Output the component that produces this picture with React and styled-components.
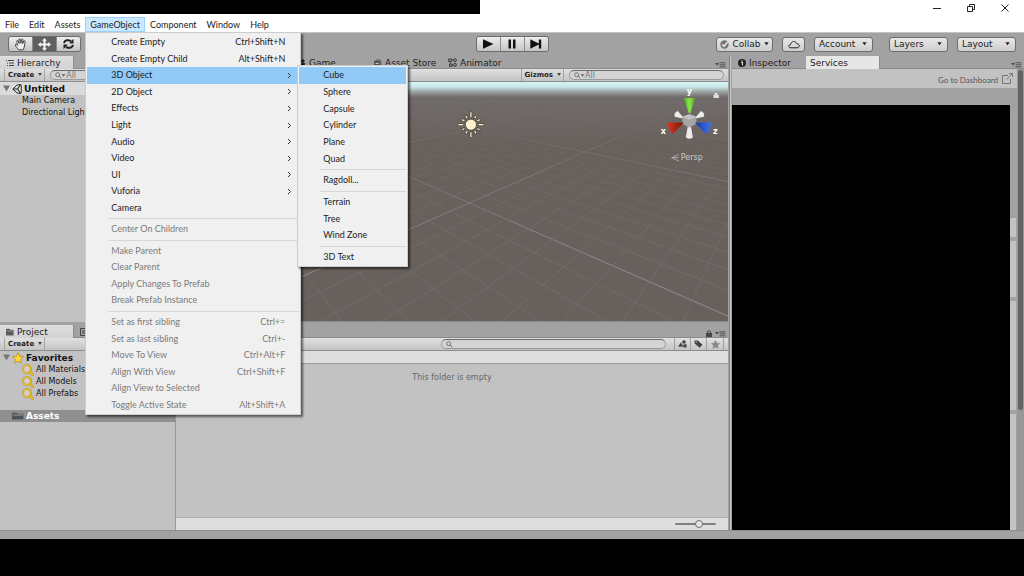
import React from 'react';
import styled, { createGlobalStyle, css } from 'styled-components';

const GlobalStyle = createGlobalStyle`
  * {
    box-sizing: border-box;
  }
  body {
    margin: 0;
    background: #000;
    color: #222;
    font-family: 'DejaVu Sans', sans-serif;
    font-size: 8px;
    line-height: 12px;
  }
  button, input, select {
    font: inherit;
    color: inherit;
    margin: 0;
    padding: 0;
    border: 0;
    background: none;
    outline: none;
  }
  ul {
    list-style: none;
    margin: 0;
    padding: 0;
  }
`;

const Screen = styled.div`
  display: flex;
  flex-direction: column;
  min-height: 100vh;
`;

/* window frame */

const TitleBar = styled.header`
  display: flex;
  justify-content: space-between;
  height: 15px;
  background: #fff;
`;

const TitleMask = styled.div`
  width: 480px;
  height: 14px;
  background: #000;
`;

const WindowButtons = styled.div`
  display: flex;
  gap: 20px;
  padding-right: 12px;
`;

const WindowButton = styled.button`
  display: flex;
  align-items: center;
  justify-content: center;
  width: 14px;
  height: 15px;
`;

const MenuBar = styled.nav`
  display: flex;
  align-items: flex-start;
  height: 17px;
  padding-top: 2px;
  background: #fff;
  font-family: Lato, sans-serif;
  font-size: 9px;
`;

const MenuSlot = styled.div`
  position: relative;
`;

const MenuTitle = styled.button`
  display: block;
  height: 15px;
  padding: 0 4px;
  border: 1px solid transparent;
  line-height: 13px;
  ${(props) =>
    props.$open &&
    css`
      background: #cce8ff;
      border-color: #99d1ff;
    `}
`;

const Menu = styled.ul`
  position: absolute;
  top: ${(props) => (props.$sub ? '-2px' : '15px')};
  left: ${(props) => (props.$sub ? '210px' : '0')};
  z-index: ${(props) => (props.$sub ? 2 : 1)};
  display: flex;
  flex-direction: column;
  width: ${(props) => (props.$sub ? '111px' : '216px')};
  height: ${(props) => (props.$sub ? '202px' : '383px')};
  padding: 1px;
  border: 1px solid #ccc;
  background: #f0f0f0;
  box-shadow: 2px 2px 2px rgba(0, 0, 0, 0.55);
`;

const MenuRow = styled.li`
  position: relative;
  flex: 1;
  display: flex;
`;

const MenuItem = styled.button`
  flex: 1;
  display: flex;
  align-items: center;
  justify-content: space-between;
  padding: 0 14px 0 24px;
  color: #222;
  text-align: left;
  white-space: nowrap;
  ${(props) =>
    props.$arrow &&
    css`
      padding-right: 7px;
    `}
  ${(props) =>
    props.$active &&
    css`
      background: #91c9f7;
    `}
  &:disabled {
    color: #7b7b7b;
  }
`;

const MenuLine = styled.li`
  height: 5px;
  margin-left: 21px;
  padding-top: 2px;
  &::before {
    content: '';
    display: block;
    height: 1px;
    background: #d7d7d7;
  }
`;

/* main toolbar */

const Toolbar = styled.div`
  display: grid;
  grid-template-columns: 1fr auto 1fr;
  align-items: center;
  height: 24px;
  padding: 0 8px 1px;
  background: #a2a2a2;
  border-top: 1px solid #c4c4c4;
`;

const ButtonGroup = styled.div`
  display: flex;
  width: max-content;
  border: 1px solid #6c6c6c;
  border-radius: 3px;
  overflow: hidden;
`;

const ToolButton = styled.button`
  display: flex;
  align-items: center;
  justify-content: center;
  width: 23px;
  height: 14px;
  background: ${(props) => (props.$on ? '#5f5f5f' : 'linear-gradient(#eee, #c4c4c4)')};
  & + & {
    width: 24px;
    border-left: 1px solid #8a8a8a;
  }
`;

const ToolbarEnd = styled.div`
  display: flex;
  justify-content: flex-end;
  gap: 9px;
`;

const Pill = styled.button`
  display: flex;
  align-items: center;
  justify-content: center;
  gap: 3px;
  width: ${(props) => (props.$wide ? '57px' : '23px')};
  height: 15px;
  border: 1px solid #6c6c6c;
  border-radius: 3px;
  background: linear-gradient(#e8e8e8, #cdcdcd);
  font-size: 9px;
`;

const SelectBox = styled.span`
  position: relative;
  display: flex;
  align-items: center;
  width: 59px;
  height: 15px;
  border: 1px solid #6c6c6c;
  border-radius: 3px;
  background: linear-gradient(#e8e8e8, #cdcdcd);
  margin-left: ${(props) => (props.$apart ? '7px' : '0')};
  svg {
    position: absolute;
    right: 5px;
    pointer-events: none;
  }
`;

const Select = styled.select`
  appearance: none;
  width: 100%;
  height: 13px;
  padding-left: 4px;
  font-size: 9px;
  line-height: 13px;
`;

/* docks */

const Workspace = styled.main`
  flex: 1;
  display: grid;
  grid-template-columns: minmax(0, 730fr) minmax(0, 294fr);
  background: #a2a2a2;
`;

const LeftSide = styled.div`
  display: grid;
  grid-template-rows: minmax(0, 269fr) minmax(0, 205fr);
  border-right: 1px solid #808080;
  padding-right: 1px;
`;

const TopDocks = styled.div`
  display: grid;
  grid-template-columns: 218px minmax(0, 1fr);
  gap: 2px;
  padding-bottom: 3px;
`;

const Dock = styled.section`
  display: flex;
  flex-direction: column;
  min-width: 0;
`;

const TabStrip = styled.div`
  display: flex;
  align-items: stretch;
  height: 13px;
  border-bottom: 1px solid #8a8a8a;
`;

const Tab = styled.button`
  display: flex;
  align-items: center;
  gap: 3px;
  width: 74px;
  height: 13px;
  padding-left: ${(props) => (props.$plain ? '4px' : '6px')};
  font-size: 9px;
  white-space: nowrap;
  ${(props) =>
    props.$active &&
    css`
      background: ${props.$bright ? '#e6e6e6' : 'linear-gradient(#dedede, #d2d2d2)'};
      border-right: 1px solid #8e8e8e;
    `}
`;

const TabTools = styled.div`
  display: flex;
  align-items: flex-end;
  gap: 3px;
  margin-left: auto;
  padding-right: 2px;
`;

const PanelBar = styled.div`
  display: flex;
  align-items: stretch;
  height: 13px;
  padding: 0 4px;
  background: linear-gradient(#e0e0e0, #c4c4c4);
  border-bottom: 1px solid #8c8c8c;
`;

const BarButton = styled.button`
  display: flex;
  align-items: center;
  justify-content: center;
  gap: 4px;
  padding: 0 2px 0 3px;
  border: solid #a4a4a4;
  border-width: 0 1px;
  font-size: 7px;
  font-weight: 700;
`;

const IconButton = styled.button`
  display: flex;
  align-items: center;
  justify-content: center;
  width: 16px;
  border-left: 1px solid #a0a0a0;
  &:last-child {
    width: 18px;
    border-right: 1px solid #a0a0a0;
  }
`;

const Spacer = styled.div`
  flex: 1;
`;

const SearchBox = styled.label`
  display: flex;
  align-items: center;
  flex: ${(props) => (props.$grow ? 1 : 'none')};
  width: ${(props) => props.$width || 'auto'};
  height: 10px;
  margin: 1px 0 0 5px;
  padding: 0 4px;
  border: 1px solid #999;
  border-top-color: #6b6b6b;
  border-radius: 5px;
  background: #d4d4d4;
  & + button {
    margin-left: 8px;
  }
`;

const SearchInput = styled.input`
  flex: 1;
  min-width: 0;
  height: 8px;
  line-height: 8px;
  &::placeholder {
    color: #777;
    opacity: 1;
  }
`;

const Tree = styled.ul`
  flex: 1;
  background: #c2c2c2;
  border-right: ${(props) => (props.$divided ? '1px solid #989898' : '0')};
`;

const TreeRow = styled.li`
  display: flex;
  align-items: center;
  gap: 2px;
  height: ${(props) => (props.$child ? '12px' : '13px')};
  padding-left: ${(props) => (props.$child ? '22px' : '3px')};
  font-size: ${(props) => (props.$child ? '8px' : '9px')};
  font-weight: ${(props) => (props.$child ? 400 : 700)};
  color: #111;
  white-space: nowrap;
  ${(props) =>
    props.$header &&
    css`
      background: #dadada;
    `}
  ${(props) =>
    props.$selected &&
    css`
      height: 12px;
      margin-top: 10px;
      padding-left: 12px;
      background: #8f8f8f;
      color: #fff;
    `}
`;

const SceneView = styled.div`
  flex: 1;
  min-height: 0;
  background: linear-gradient(#d4f4f5 0, #c9e6e6 5px, #a3abab 9px, #716c6b 15px, #68605c 60px);
  border-bottom: 1px solid #8a8a8a;
  svg {
    display: block;
    width: 100%;
    height: 100%;
  }
`;

const ProjectBody = styled.div`
  flex: 1;
  display: grid;
  grid-template-columns: 176px minmax(0, 1fr);
`;

const Files = styled.div`
  display: flex;
  flex-direction: column;
  background: #c2c2c2;
`;

const Crumbs = styled.div`
  height: 13px;
  background: #dedede;
  border-bottom: 1px solid #9c9c9c;
`;

const EmptyNote = styled.p`
  flex: 1;
  margin: 0;
  padding-top: 8px;
  text-align: center;
  color: #666;
`;

const FilesFooter = styled.div`
  display: flex;
  align-items: center;
  justify-content: flex-end;
  height: 13px;
  padding: 0 12px 1px 0;
  background: #dedede;
  border-top: 1px solid #b0b0b0;
`;

const Slider = styled.input`
  appearance: none;
  width: 41px;
  height: 2px;
  border-radius: 1px;
  background: #808080;
  &::-webkit-slider-thumb {
    appearance: none;
    width: 8px;
    height: 8px;
    border: 1px solid #707070;
    border-radius: 50%;
    background: #e4e4e4;
  }
`;

const Inspector = styled(Dock)`
  padding-left: 1px;
  border-left: 1px solid #c8c8c8;
`;

const InspectorBody = styled.div`
  flex: 1;
  display: flex;
`;

const ServiceColumn = styled.div`
  flex: 1;
  display: flex;
  flex-direction: column;
`;

const Dashboard = styled.div`
  display: flex;
  align-items: center;
  justify-content: flex-end;
  height: 19px;
  padding-right: 4px;
  background: #c2c2c2;
`;

const DashboardLink = styled.a`
  display: flex;
  align-items: center;
  gap: 4px;
  padding-top: 2px;
  color: #555;
  font-family: Lato, sans-serif;
  text-decoration: none;
  svg {
    margin-bottom: 3px;
  }
`;

const ServiceArea = styled.div`
  flex: 1;
  display: flex;
  padding-top: 17px;
`;

const Blackout = styled.div`
  flex: 1;
  background: #000;
`;

const CardEdges = styled.div`
  display: flex;
  flex-direction: column;
  gap: 4px;
  width: 7px;
  padding: 113px 1px 0 0;
`;

const CardEdge = styled.div`
  flex: ${(props) => props.$grow};
  background: #c3c3c3;
`;

const ScrollTrack = styled.div`
  width: 7px;
  padding: 1px 1px 0;
  background: #989898;
`;

const ScrollThumb = styled.div`
  height: 74%;
  border-radius: 3px;
  background: #636363;
`;

const StatusBar = styled.footer`
  height: 9px;
  background: #a2a2a2;
  border-top: 1px solid #8d8d8d;
`;

const BottomMask = styled.div`
  height: 37px;
  background: #000;
`;

/* icons */

const Caret = () => (
  <svg width="5" height="4" viewBox="0 0 5 4"><path d="M.3 .3h4.400L2.500 3.300z" fill="#222" /></svg>
);

const SmallCaret = () => (
  <svg width="4" height="5" viewBox="0 0 4 5"><path d="M0 0h4L2 3z" fill="#444" /></svg>
);

const Chevron = () => (
  <svg width="5" height="7" viewBox="0 0 5 7"><path d="M1 1l2.500 2.500L1 6" fill="none" stroke="#333" /></svg>
);

const Fold = () => (
  <svg width="7" height="7" viewBox="0 0 7 7"><path d="M0 .5h7L3.500 6.500z" fill="#777" /></svg>
);

const Lens = () => (
  <svg width="9" height="7" viewBox="0 0 9 7">
    <circle cx="2.700" cy="2.700" r="2" fill="none" stroke="#666" strokeWidth=".9" />
    <path d="M4.200 4.200l2 2" stroke="#666" />
  </svg>
);

const LensMenu = () => (
  <svg width="11" height="7" viewBox="0 0 11 7">
    <circle cx="2.700" cy="2.700" r="2" fill="none" stroke="#666" strokeWidth=".9" />
    <path d="M4.200 4.200l2 2" stroke="#666" />
    <path d="M6.500 2.200h4l-2 2.500z" fill="#666" />
  </svg>
);

const DockMenu = () => (
  <svg width="11" height="6" viewBox="0 0 11 6">
    <path d="M0 1h4L2 3.400z" fill="#444" />
    <path d="M4.500 .8h6M4.500 2.800h6M4.500 4.800h6" stroke="#505050" />
  </svg>
);

const ListIcon = () => (
  <svg width="8" height="8" viewBox="0 0 8 8">
    <path d="M0 1.500h1M2 1.500h6M1 4h1M3 4h5M1 6.500h1M3 6.500h5" stroke="#444" />
  </svg>
);

const ConsoleIcon = () => (
  <svg width="8" height="8" viewBox="0 0 8 8"><path d="M.5 .5h7v7h-7zM2 3h4M2 5h4" fill="none" stroke="#444" /></svg>
);

const FolderIcon = ({ color = '#5a5a5a', size = 8 }) => (
  <svg width={size} height="8" viewBox="0 0 8 8" preserveAspectRatio="none">
    <path d="M0 1.500L.7 .8h2.600l.8 1H7.600v5.600H0z" fill={color} />
    <path d="M.5 3h6.600" stroke="#bbb" strokeWidth=".6" />
  </svg>
);

const UnityLogo = () => (
  <svg width="10" height="10" viewBox="0 0 10 10">
    <path d="M.8 5L5.200 1l3.600-.5.700 3.600L8.700 5l.8.900-.7 3.600L5.200 9z" fill="#e8e8e8" stroke="#222" />
    <path d="M1 5h4.600M5.600 5L8.200 1M5.600 5l2.600 4" stroke="#222" strokeWidth="1.100" />
  </svg>
);

const StarIcon = ({ fill, stroke, size }) => (
  <svg width={size} height={size} viewBox="0 0 12 12">
    <path d="M6 .8l1.600 3.400 3.700.4-2.700 2.600.7 3.800L6 9.200 2.700 11l.7-3.800L.7 4.600l3.700-.4z" fill={fill} stroke={stroke} strokeWidth=".8" />
  </svg>
);

const GoldLens = () => (
  <svg width="12" height="12" viewBox="0 0 12 12">
    <path d="M7.600 7.600l3 3" stroke="#a57f12" strokeWidth="2.600" strokeLinecap="round" />
    <path d="M7.600 7.600l3 3" stroke="#f2c92c" strokeWidth="1.600" strokeLinecap="round" />
    <circle cx="5" cy="5" r="3.900" fill="#d2d2cc" stroke="#a57f12" strokeWidth="1.800" />
    <circle cx="5" cy="5" r="3.900" fill="none" stroke="#f0c52a" strokeWidth="1.200" />
  </svg>
);

const HandIcon = () => (
  <svg width="14" height="13" viewBox="0 0 14 13">
    <path d="M4.500 11.800C3.500 10 1.600 8.500 1.300 7c0-1 1.200-.9 2.200.4L2.800 3.300c0-1.100 1.300-1.200 1.600-.1l.7 2.200-.2-3.800c.2-1 1.500-1 1.700 0l.3 3.700.6-3.600c.3-1 1.600-.7 1.500.3l-.3 3.600 1-2.500c.5-.9 1.600-.4 1.400.6-.6 3-.5 5.800-2 8.100z" fill="#f0f0f0" stroke="#333" strokeWidth=".9" />
  </svg>
);

const MoveIcon = () => (
  <svg width="13" height="13" viewBox="0 0 14 14">
    <path d="M7 0l2.600 3H8.100v2.900H11V4.400L14 7l-3 2.600V8.100H8.100V11h1.500L7 14l-2.600-3h1.500V8.100H3v1.500L0 7l3-2.600v1.500h2.900V3H4.400z" fill="#f4f4f4" />
  </svg>
);

const RotateIcon = () => (
  <svg width="13" height="12" viewBox="0 0 13 12">
    <path d="M2 5C2.500 2.300 6 1.200 9 3.200M11 7c-.5 2.700-4 3.800-7 1.800" fill="none" stroke="#222" strokeWidth="2" />
    <path d="M11.500 .8v4.600H7.200zM1.500 11.200V6.600h4.300z" fill="#222" />
  </svg>
);

const PlayIcon = () => (
  <svg width="12" height="10" viewBox="0 0 12 10"><path d="M1 .3L11.500 5 1 9.700z" fill="#111" /></svg>
);

const PauseIcon = () => (
  <svg width="8" height="10" viewBox="0 0 8 10"><path d="M.5 .5h2.500v9H.5zM5 .5h2.500v9H5z" fill="#111" /></svg>
);

const StepIcon = () => (
  <svg width="12" height="10" viewBox="0 0 12 10"><path d="M.3 .3L8.800 4.600V.5h2.400v9H8.800V5.400L.3 9.700z" fill="#111" /></svg>
);

const CheckIcon = () => (
  <svg width="9" height="9" viewBox="0 0 9 9">
    <circle cx="4.500" cy="4.500" r="4.200" fill="#777" />
    <path d="M2.200 4.400l1.800 1.900L7.700 2" fill="none" stroke="#eee" strokeWidth="1.400" />
  </svg>
);

const CloudIcon = () => (
  <svg width="12" height="9" viewBox="0 0 12 9">
    <path d="M2.800 7.800C.2 7.600.2 4.800 2.600 4.600 2.900 1 7.600.3 8.400 3.600c3.700 0 3.700 4.200.6 4.200z" fill="none" stroke="#222" />
  </svg>
);

const LockIcon = () => (
  <svg width="6" height="7" viewBox="0 0 6 7">
    <path d="M1.500 3.500V2c0-1.500 3-1.500 3 0v1.500" fill="none" stroke="#444" />
    <path d="M0 3h6v4H0z" fill="#444" />
  </svg>
);

const InfoIcon = () => (
  <svg width="8" height="8" viewBox="0 0 8 8">
    <circle cx="4" cy="4" r="4" fill="#222" />
    <path d="M3.200 3.400h1.300v3" fill="none" stroke="#ddd" strokeWidth="1.100" />
    <circle cx="4" cy="1.900" r=".7" fill="#ddd" />
  </svg>
);

const GameIcon = () => (
  <svg width="6" height="8" viewBox="0 0 6 8"><path d="M3 0l2 2-2 1.500 2.500 1L3 8 1 5.500 2.500 4 .5 2z" fill="#222" /></svg>
);

const StoreIcon = () => (
  <svg width="8" height="8" viewBox="0 0 8 8">
    <path d="M0 2h6v5.500H0z" fill="#555" />
    <path d="M2 3V1h4v2M7 2v5" fill="none" stroke="#555" />
    <path d="M1.500 4.500h3" stroke="#ccc" />
  </svg>
);

const AnimatorIcon = () => (
  <svg width="9" height="9" viewBox="0 0 9 9" fill="#888" stroke="#333" strokeWidth=".8">
    <path d="M.5 1h3v2.500h-3zM1.500 6h2.500v2.500H1.500z" />
    <path d="M3.500 2h2M2.500 3.500V6M4 7h1.500" />
    <circle cx="7" cy="2.200" r="1.500" />
    <circle cx="7" cy="6.800" r="1.500" />
  </svg>
);

const KindsIcon = () => (
  <svg width="9" height="8" viewBox="0 0 9 8" fill="#444">
    <path d="M0 6.800L3 2.300l2.200 4.500z" />
    <circle cx="6" cy="2" r="1.800" />
    <path d="M5.300 4.300h3.200v3.200H5.300z" />
  </svg>
);

const TagIcon = () => (
  <svg width="9" height="8" viewBox="0 0 9 8">
    <path d="M.5 .5h3.300L8.500 4.800 5.700 7.800.5 3.600z" fill="#444" />
    <circle cx="2.200" cy="2.100" r=".7" fill="#ddd" />
  </svg>
);

const LinkIcon = () => (
  <svg width="11" height="11" viewBox="0 0 11 11" fill="none" stroke="#777">
    <path d="M6 2.500H.5v8h8V6M4.500 6.500l6-6M7 .5h3.500V4" />
  </svg>
);

/* the ground grid runs to one vanishing point on each side */

const gridLines = [];
for (let i = -7; i < 24; i += 1) {
  gridLines.push({ x1: 147, y1: 61, x2: 739 + i * 66, major: i % 10 === 0 });
}
for (let i = -20; i < 9; i += 1) {
  gridLines.push({ x1: 803, y1: 56, x2: 203 + i * 60, major: i % 10 === 0 });
}

const rays = Array.from({ length: 12 }, (_, i) => i * 30);

const Scene = () => (
  <svg viewBox="220 82 508 238" preserveAspectRatio="xMaxYMin slice">
    <defs>
      <linearGradient id="fade" gradientUnits="userSpaceOnUse" x1="0" y1="98" x2="0" y2="260">
        <stop offset="0" stopColor="#000" />
        <stop offset=".5" stopColor="#777" />
        <stop offset="1" stopColor="#ddd" />
      </linearGradient>
      <mask id="ground" maskUnits="userSpaceOnUse" x="220" y="82" width="508" height="240">
        <rect x="220" y="82" width="508" height="240" fill="url(#fade)" />
      </mask>
      <linearGradient id="red"><stop stopColor="#d43a1d" /><stop offset="1" stopColor="#7c1408" /></linearGradient>
      <linearGradient id="green"><stop stopColor="#4fae1c" /><stop offset=".5" stopColor="#8ce64a" /><stop offset="1" stopColor="#4a9c1c" /></linearGradient>
      <linearGradient id="blue"><stop stopColor="#163aa4" /><stop offset="1" stopColor="#3d72f0" /></linearGradient>
    </defs>
    <g mask="url(#ground)">
      {gridLines.map((line) => (
        <line
          key={`${line.x1}-${line.x2}`}
          x1={line.x1}
          y1={line.y1}
          x2={line.x2}
          y2="320"
          stroke={line.major ? '#8f8d8b' : '#77716e'}
          strokeWidth={line.major ? 1 : 0.8}
        />
      ))}
    </g>
    <g transform="translate(472 124.500)">
      {rays.map((angle, i) => (
        <path key={angle} d={`M0 -7V${i % 3 === 0 ? -13 : -10.5}`} transform={`rotate(${angle})`} stroke="#453f36" strokeWidth="2.600" />
      ))}
      {rays.map((angle, i) => (
        <path key={angle} d={`M0 -7.500V${i % 3 === 0 ? -12.5 : -10}`} transform={`rotate(${angle})`} stroke="#fdf1d0" strokeWidth="1.300" />
      ))}
      <circle r="5.500" fill="#fdf1d0" stroke="#50483c" strokeWidth=".8" />
    </g>
    <g>
      <path d="M684.500 118.500l-9.500-2q-1.500-3.500 3-5.500zM694.500 118.500l9.500-2q1.500-3.500-3-5.500z" fill="#ececec" />
      <path d="M688.500 123l-2.500 14q3.500 3 7 0l-2.500-14z" fill="#ececec" />
      <path d="M689.500 114l7 2.500v7l-7 4-7-4v-7z" fill="#a5a5a8" />
      <path d="M689.500 114l7 2.500-7 3-7-3z" fill="#c3c3c6" />
      <path d="M684 98h11.500l-5 15h-1.500z" fill="url(#green)" />
      <path d="M667.500 122.300l16.500 0-10.500 11.200q-4-1-6-11.200z" fill="url(#red)" />
      <path d="M711.500 122.300h-16.500l10.500 11.200q4-1 6-11.200z" fill="url(#blue)" />
      <g fill="#fff" fontFamily="DejaVu Sans" fontWeight="700" fontSize="8">
        <text x="687" y="94">y</text>
        <text x="661" y="134">x</text>
        <text x="713" y="134">z</text>
      </g>
      <path d="M679 154l-7 3.500 7 3M679 157.300h-7" fill="none" stroke="#bbb" strokeWidth=".8" />
      <text x="681" y="160" fill="#c8c8c8" fontFamily="DejaVu Sans" fontSize="8">Persp</text>
      <path d="M713.500 95h5.500v3h-5.500zM714.500 95v-2h3v2" fill="#ddd" />
    </g>
  </svg>
);

const objectItems = [
  ['Cube', 'Sphere', 'Capsule', 'Cylinder', 'Plane', 'Quad'],
  ['Ragdoll...'],
  ['Terrain', 'Tree', 'Wind Zone'],
  ['3D Text'],
];

const gameObjectItems = [
  [
    { label: 'Create Empty', keys: 'Ctrl+Shift+N' },
    { label: 'Create Empty Child', keys: 'Alt+Shift+N' },
    { label: '3D Object', arrow: true, open: true },
    { label: '2D Object', arrow: true },
    { label: 'Effects', arrow: true },
    { label: 'Light', arrow: true },
    { label: 'Audio', arrow: true },
    { label: 'Video', arrow: true },
    { label: 'UI', arrow: true },
    { label: 'Vuforia', arrow: true },
    { label: 'Camera' },
  ],
  [{ label: 'Center On Children', off: true }],
  [
    { label: 'Make Parent', off: true },
    { label: 'Clear Parent', off: true },
    { label: 'Apply Changes To Prefab', off: true },
    { label: 'Break Prefab Instance', off: true },
  ],
  [
    { label: 'Set as first sibling', keys: 'Ctrl+=', off: true },
    { label: 'Set as last sibling', keys: 'Ctrl+-', off: true },
    { label: 'Move To View', keys: 'Ctrl+Alt+F', off: true },
    { label: 'Align With View', keys: 'Ctrl+Shift+F', off: true },
    { label: 'Align View to Selected', off: true },
    { label: 'Toggle Active State', keys: 'Alt+Shift+A', off: true },
  ],
];

function ObjectMenu() {
  return (
    <Menu $sub role="menu">
      {objectItems.map((group, g) => (
        <React.Fragment key={group[0]}>
          {g > 0 && <MenuLine role="separator" />}
          {group.map((label) => (
            <MenuRow key={label}>
              <MenuItem role="menuitem" $active={label === 'Cube'}>{label}</MenuItem>
            </MenuRow>
          ))}
        </React.Fragment>
      ))}
    </Menu>
  );
}

function GameObjectMenu() {
  return (
    <Menu role="menu">
      {gameObjectItems.map((group, g) => (
        <React.Fragment key={group[0].label}>
          {g > 0 && <MenuLine role="separator" />}
          {group.map((item) => (
            <MenuRow key={item.label}>
              <MenuItem role="menuitem" disabled={item.off} $active={item.open} $arrow={item.arrow}>
                <span>{item.label}</span>
                {item.keys && <span>{item.keys}</span>}
                {item.arrow && <Chevron />}
              </MenuItem>
              {item.open && <ObjectMenu />}
            </MenuRow>
          ))}
        </React.Fragment>
      ))}
    </Menu>
  );
}

function DropDown({ label, apart }) {
  return (
    <SelectBox $apart={apart}>
      <Select aria-label={label}>
        <option>{label}</option>
      </Select>
      <Caret />
    </SelectBox>
  );
}

function Search({ label, placeholder, width, grow }) {
  return (
    <SearchBox $width={width} $grow={grow}>
      {placeholder ? <LensMenu /> : <Lens />}
      <SearchInput type="text" aria-label={label} placeholder={placeholder} />
    </SearchBox>
  );
}

export default function App() {
  return (
    <Screen>
      <GlobalStyle />
      <TitleBar>
        <TitleMask />
        <WindowButtons>
          <WindowButton aria-label="Minimize">
            <svg width="8" height="8" viewBox="0 0 8 8"><path d="M0 4.500h8" stroke="#222" /></svg>
          </WindowButton>
          <WindowButton aria-label="Restore">
            <svg width="8" height="8" viewBox="0 0 8 8" fill="none" stroke="#222"><path d="M.5 2.500h5v5h-5zM2.500 2.500v-2h5v5h-2" /></svg>
          </WindowButton>
          <WindowButton aria-label="Close">
            <svg width="8" height="8" viewBox="0 0 8 8"><path d="M.5 .5l7 7M7.500 .5l-7 7" stroke="#222" /></svg>
          </WindowButton>
        </WindowButtons>
      </TitleBar>

      <MenuBar>
        <MenuTitle>File</MenuTitle>
        <MenuTitle>Edit</MenuTitle>
        <MenuTitle>Assets</MenuTitle>
        <MenuSlot>
          <MenuTitle $open>GameObject</MenuTitle>
          <GameObjectMenu />
        </MenuSlot>
        <MenuTitle>Component</MenuTitle>
        <MenuTitle>Window</MenuTitle>
        <MenuTitle>Help</MenuTitle>
      </MenuBar>

      <Toolbar>
        <ButtonGroup>
          <ToolButton aria-label="Hand"><HandIcon /></ToolButton>
          <ToolButton aria-label="Move" $on><MoveIcon /></ToolButton>
          <ToolButton aria-label="Rotate"><RotateIcon /></ToolButton>
        </ButtonGroup>
        <ButtonGroup>
          <ToolButton aria-label="Play"><PlayIcon /></ToolButton>
          <ToolButton aria-label="Pause"><PauseIcon /></ToolButton>
          <ToolButton aria-label="Step"><StepIcon /></ToolButton>
        </ButtonGroup>
        <ToolbarEnd>
          <Pill $wide><CheckIcon />Collab<Caret /></Pill>
          <Pill aria-label="Cloud"><CloudIcon /></Pill>
          <DropDown label="Account" />
          <DropDown label="Layers" apart />
          <DropDown label="Layout" />
        </ToolbarEnd>
      </Toolbar>

      <Workspace>
        <LeftSide>
          <TopDocks>
            <Dock>
              <TabStrip>
                <Tab $active><ListIcon />Hierarchy</Tab>
              </TabStrip>
              <PanelBar>
                <BarButton>Create<SmallCaret /></BarButton>
                <Search label="Search hierarchy" placeholder="All" grow />
              </PanelBar>
              <Tree>
                <TreeRow $header><Fold /><UnityLogo />Untitled</TreeRow>
                <TreeRow $child>Main Camera</TreeRow>
                <TreeRow $child>Directional Light</TreeRow>
              </Tree>
            </Dock>
            <Dock>
              <TabStrip>
                <Tab $active aria-label="Scene" />
                <Tab><GameIcon />Game</Tab>
                <Tab><StoreIcon />Asset Store</Tab>
                <Tab><AnimatorIcon />Animator</Tab>
                <TabTools><DockMenu /></TabTools>
              </TabStrip>
              <PanelBar>
                <Spacer />
                <BarButton>Gizmos<SmallCaret /></BarButton>
                <Search label="Search scene" placeholder="All" width="155px" />
              </PanelBar>
              <SceneView><Scene /></SceneView>
            </Dock>
          </TopDocks>

          <Dock>
            <TabStrip>
              <Tab $active><FolderIcon />Project</Tab>
              <Tab aria-label="Console"><ConsoleIcon /></Tab>
              <TabTools><LockIcon /><DockMenu /></TabTools>
            </TabStrip>
            <PanelBar>
              <BarButton>Create<SmallCaret /></BarButton>
              <Spacer />
              <Search label="Search project" width="225px" />
              <IconButton aria-label="Search by type"><KindsIcon /></IconButton>
              <IconButton aria-label="Search by label"><TagIcon /></IconButton>
              <IconButton aria-label="Save search"><StarIcon size="9" fill="#888" stroke="#888" /></IconButton>
            </PanelBar>
            <ProjectBody>
              <Tree $divided>
                <TreeRow><Fold /><StarIcon size="12" fill="#ffd83a" stroke="#b98c14" />Favorites</TreeRow>
                <TreeRow $child><GoldLens />All Materials</TreeRow>
                <TreeRow $child><GoldLens />All Models</TreeRow>
                <TreeRow $child><GoldLens />All Prefabs</TreeRow>
                <TreeRow $selected><FolderIcon size={12} color="#4c5556" />Assets</TreeRow>
              </Tree>
              <Files>
                <Crumbs />
                <EmptyNote>This folder is empty</EmptyNote>
                <FilesFooter>
                  <Slider type="range" aria-label="Icon size" min="0" max="100" defaultValue="60" />
                </FilesFooter>
              </Files>
            </ProjectBody>
          </Dock>
        </LeftSide>

        <Inspector>
          <TabStrip>
            <Tab><InfoIcon />Inspector</Tab>
            <Tab $active $bright $plain>Services</Tab>
            <TabTools><DockMenu /></TabTools>
          </TabStrip>
          <InspectorBody>
            <ServiceColumn>
              <Dashboard>
                <DashboardLink href="#dashboard">Go to Dashboard<LinkIcon /></DashboardLink>
              </Dashboard>
              <ServiceArea>
                <Blackout />
                <CardEdges>
                  <CardEdge $grow={19} />
                  <CardEdge $grow={56} />
                  <CardEdge $grow={110} />
                  <CardEdge $grow={116} />
                </CardEdges>
              </ServiceArea>
            </ServiceColumn>
            <ScrollTrack><ScrollThumb /></ScrollTrack>
          </InspectorBody>
        </Inspector>
      </Workspace>
      <StatusBar />
      <BottomMask />
    </Screen>
  );
}
